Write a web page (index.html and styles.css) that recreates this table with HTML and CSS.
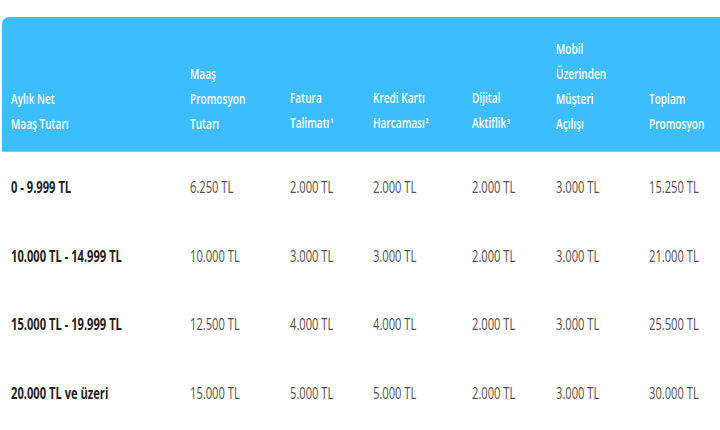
FILE: index.html
```html
<!DOCTYPE html>
<html lang="tr">
<head>
<meta charset="utf-8">
<link rel="stylesheet" href="styles.css">
</head>
<body>
<div class="table">
  <div class="head">
    <div class="cell first"><span class="t">Aylık Net<br>Maaş Tutarı</span></div>
    <div class="cell"><span class="t">Maaş<br>Promosyon<br>Tutarı</span></div>
    <div class="cell"><span class="t">Fatura<br>Talimatı<span class="sup">¹</span></span></div>
    <div class="cell"><span class="t">Kredi Kartı<br>Harcaması<span class="sup">²</span></span></div>
    <div class="cell"><span class="t">Dijital<br>Aktiflik<span class="sup">³</span></span></div>
    <div class="cell"><span class="t">Mobil<br>Üzerinden<br>Müşteri<br>Açılışı</span></div>
    <div class="cell"><span class="t">Toplam<br>Promosyon</span></div>
  </div>
  <div class="row">
    <div class="cell first"><span class="t">0 - 9.999 TL</span></div>
    <div class="cell"><span class="t">6.250 TL</span></div>
    <div class="cell"><span class="t">2.000 TL</span></div>
    <div class="cell"><span class="t">2.000 TL</span></div>
    <div class="cell"><span class="t">2.000 TL</span></div>
    <div class="cell"><span class="t">3.000 TL</span></div>
    <div class="cell"><span class="t">15.250 TL</span></div>
  </div>
  <div class="row">
    <div class="cell first"><span class="t">10.000 TL - 14.999 TL</span></div>
    <div class="cell"><span class="t">10.000 TL</span></div>
    <div class="cell"><span class="t">3.000 TL</span></div>
    <div class="cell"><span class="t">3.000 TL</span></div>
    <div class="cell"><span class="t">2.000 TL</span></div>
    <div class="cell"><span class="t">3.000 TL</span></div>
    <div class="cell"><span class="t">21.000 TL</span></div>
  </div>
  <div class="row">
    <div class="cell first"><span class="t">15.000 TL - 19.999 TL</span></div>
    <div class="cell"><span class="t">12.500 TL</span></div>
    <div class="cell"><span class="t">4.000 TL</span></div>
    <div class="cell"><span class="t">4.000 TL</span></div>
    <div class="cell"><span class="t">2.000 TL</span></div>
    <div class="cell"><span class="t">3.000 TL</span></div>
    <div class="cell"><span class="t">25.500 TL</span></div>
  </div>
  <div class="row">
    <div class="cell first"><span class="t">20.000 TL ve üzeri</span></div>
    <div class="cell"><span class="t">15.000 TL</span></div>
    <div class="cell"><span class="t">5.000 TL</span></div>
    <div class="cell"><span class="t">5.000 TL</span></div>
    <div class="cell"><span class="t">2.000 TL</span></div>
    <div class="cell"><span class="t">3.000 TL</span></div>
    <div class="cell"><span class="t">30.000 TL</span></div>
  </div>
</div>
</body>
</html>
```
FILE: styles.css
```css
html, body {
  margin: 0;
  padding: 0;
  background: #ffffff;
}
body {
  font-family: "Open Sans", "Liberation Sans", sans-serif;
  width: 720px;
  height: 430px;
  overflow: hidden;
}
.table {
  margin: 17px 0 0 2px;
  width: 718px;
}
.head, .row {
  display: grid;
  grid-template-columns: 188px 100px 83px 99px 84px 93px 1fr;
}
.head {
  height: 135px;
  box-sizing: border-box;
  padding-bottom: 15px;
  background: #3bbdfe;
  border-top-left-radius: 7px;
  border-bottom: 1px solid #6fd0fe;
  align-items: end;
  color: #ffffff;
  font-size: 14px;
  font-weight: 600;
  line-height: 25px;
}
.sup {
  font-size: 11px;
  font-weight: 700;
  margin-left: 1px;
}
.row {
  height: 68.5px;
  box-sizing: border-box;
  padding-top: 2px;
  align-items: center;
  color: #505050;
  font-size: 15.5px;
  line-height: 20px;
}
.row .first {
  color: #222222;
  font-weight: 700;
}
.cell {
  white-space: nowrap;
}
.cell.first {
  padding-left: 9px;
}
.t {
  display: inline-block;
  transform: scaleX(0.72);
  transform-origin: left center;
}
```
